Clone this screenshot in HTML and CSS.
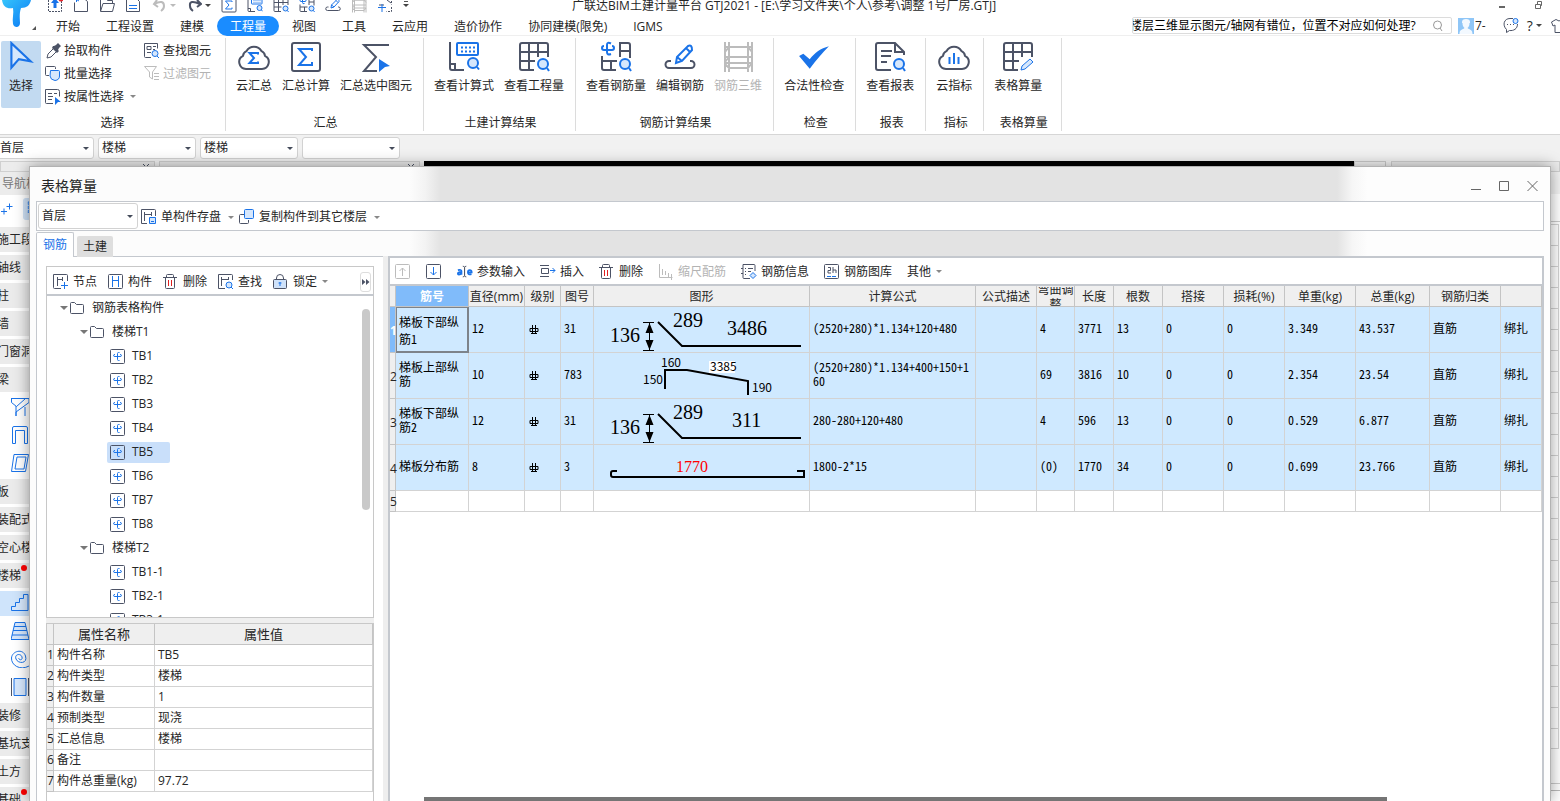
FILE: index.html
```html
<!DOCTYPE html>
<html lang="zh-CN">
<head>
<meta charset="utf-8">
<title>广联达BIM土建计量平台 GTJ2021</title>
<link rel="stylesheet" href="styles.css">
</head>
<body>
<svg class="defs" aria-hidden="true">
  <symbol id="sum-cloud" viewBox="0 0 32 30"><path class="d2" d="M8 27h16a7 7 0 0 0 3-13.2 6 6 0 0 0-3.400-4.600 8.800 8.800 0 0 0-15.200 0A6 6 0 0 0 5 13.800 7 7 0 0 0 8 27z"/><path class="b2" d="M20 12.500V11h-8.500l4.500 5-4.500 5H20v-1.500"/></symbol>
  <symbol id="sum-box" viewBox="0 0 32 32"><rect class="d2" x="2" y="2" width="28" height="28" rx="2"/><path class="b2" d="M22 10V8H9l7 8-7 8h13v-3"/></symbol>
  <symbol id="sum-pick" viewBox="0 0 32 32"><path class="d2" d="M29 4H4l12 12L4 30h13"/><path class="bf" d="M19 18l11 7-5 1-6 5z"/></symbol>
  <symbol id="calc-view" viewBox="0 0 32 32"><path class="d2" d="M2 1v26q0 2 2 2h12M2 23h5v6"/><rect class="b2" x="9" y="2" width="21" height="12" rx="1"/><path class="b2 dots" d="M13 6.500h14M13 10.500h14"/><circle class="bl2" cx="25" cy="22" r="5"/><path class="b2" d="M29 26l2 2.500"/></symbol>
  <symbol id="qty-view" viewBox="0 0 32 32"><path class="d2" d="M16 29H4q-2 0-2-2V4q0-2 2-2h24q2 0 2 2v12M2 11h28M2 20h15M11 2v27M20 2v14"/><circle class="bl2" cx="25" cy="23" r="5"/><path class="b2" d="M29 27l2 3"/></symbol>
  <symbol id="bar-view" viewBox="0 0 32 32"><path class="b2" d="M11 2.500q-4-2-4 1.500v7q0 3.500 4 2M4 5q-2 0-2 2t2 2h8q2 0 2-2t-2-2"/><path class="d2" d="M20 16V2h8q2 0 2 2v13M20 10h10M2 15v12q0 2 2 2h12M2 20h15M11 20v9"/><circle class="bl2" cx="25" cy="23" r="5"/><path class="b2" d="M29 27l2 3"/></symbol>
  <symbol id="bar-edit" viewBox="0 0 32 30"><path class="d2" d="M7 19H5a3.500 3.500 0 0 0 0 7h22a3.500 3.500 0 0 0 0-7h-1"/><path class="bl heavy" d="M12 21l1-6L24 4q2-1 3 0t1 4L18 19zM22 6l4 4M13 15l5 4"/></symbol>
  <symbol id="bar-3d" viewBox="0 0 32 30"><path class="g2" d="M3 0v30M7 0v30M26 0v30M30 0v30M3 5h27M3 10l4-5h19l4 5M3 15h27M3 21h27M3 20l4-5M26 26H7l-4-4M7 26h19l4-5"/></symbol>
  <symbol id="check" viewBox="0 0 30 30"><path class="bf" d="M1 14l4-2 6 5c5-6 10-10 18-12C23 11 17 18 11 26z"/></symbol>
  <symbol id="report" viewBox="0 0 32 32"><path class="d2" d="M17 29H4q-2 0-2-2V4q0-2 2-2h17l9 9v3M21 2v9h9M7 10h11M7 15h10M7 21h6"/><circle class="bl2" cx="25" cy="23" r="5"/><path class="b2" d="M29 27l2 3"/></symbol>
  <symbol id="index-cloud" viewBox="0 0 32 30"><path class="d2" d="M8 27h16a7 7 0 0 0 3-13.200 6 6 0 0 0-3.400-4.600 8.800 8.800 0 0 0-15.200 0A6 6 0 0 0 5 13.800 7 7 0 0 0 8 27z"/><path class="b2" d="M11.500 15v7M16 11v11M20.500 15v7"/></symbol>
  <symbol id="table-calc" viewBox="0 0 32 32"><path class="d2" d="M16 29H4q-2 0-2-2V4q0-2 2-2h24q2 0 2 2v12M2 11h28M2 20h15M11 2v27M20 2v14"/><path class="bl" d="M19 29l1-4 8-7 3 3-8 7z"/></symbol>
  <symbol id="pointer" viewBox="0 0 30 30"><path class="bl2" d="M6 2v23l7-8 11 2z"/></symbol>
  <symbol id="dropper" viewBox="0 0 16 16"><path class="df" d="M9 3l2-1 2-2 3 3-2 2-1 2 1 1-2 2-5-5 1-2z"/><path class="d" d="M8 6l-5 5-1 4 4-1 5-5"/></symbol>
  <symbol id="batch" viewBox="0 0 16 16"><path class="d" d="M4 9.500H1.500q-1 0-1-1v-7q0-1 1-1h8q1 0 1 1V3"/><path class="bl" d="M5.500 4.500h8q1 0 1 1V10q0 4-4.500 4.500-4.500-.5-5-4.500z"/></symbol>
  <symbol id="byprop" viewBox="0 0 16 16"><path class="d" d="M8 14.500H1.500q-1 0-1-1V.5h12q2 0 2 2v5M3 4.500h4M9 4.500h3M3 7.500h5M3 10.500h4"/><path class="bf" d="M10 8l6 5-3 0-3 3z"/></symbol>
  <symbol id="findel" viewBox="0 0 16 16"><path class="d" d="M7 14.500H1.500q-1 0-1-1V.5h13v5M3 3.500h4v3H3zM9 3.500h3M3 9.500h4M9 6.500h2"/><circle class="bl" cx="11" cy="10.500" r="3"/><path class="b" d="M13 13l2 2"/></symbol>
  <symbol id="filter" viewBox="0 0 16 16"><path class="g" d="M.5 .5h12L8.500 6v7l-3-2V6zM10 7.500h5M10 10.500h5M10 13.500h5"/></symbol>
  <symbol id="comp" viewBox="0 0 16 16"><rect class="d" x=".5" y=".5" width="14" height="14" rx="1"/><path class="b" d="M4.500 2v11M10.500 2v11M4.500 6.500h6"/></symbol>
  <symbol id="node" viewBox="0 0 16 16"><path class="d" d="M8 14.500H1.500q-1 0-1-1v-13h13q1 0 1 1V7M4.500 3v9M4.500 5.500h5M9.500 3v4"/><path class="b" d="M11.500 8v7M8 11.500h7"/></symbol>
  <symbol id="save" viewBox="0 0 16 16"><path class="d" d="M6 14.500H.5V.5h13q1 0 1 1V7M3.500 3v9M3.500 5.500h7M10.500 3v4"/><path class="bl" d="M8.500 8.500h6v6h-6zM10 12.500h3"/></symbol>
  <symbol id="find" viewBox="0 0 16 16"><path class="d" d="M7 14.500H.5V.5h13q1 0 1 1V6M3.500 3v9M3.500 5.500h7M10.500 3v3"/><circle class="bl" cx="11" cy="11" r="3"/><path class="b" d="M13 13l2 2"/></symbol>
  <symbol id="copy" viewBox="0 0 16 16"><path class="d" d="M9.500 11v2.500q0 1-1 1h-7q-1 0-1-1v-7q0-1 1-1H5"/><rect class="bl" x="5.500" y=".5" width="9" height="9" rx="1"/></symbol>
  <symbol id="trash" viewBox="0 0 16 16"><path class="d" d="M0 3.500h14M3.500 3.500v-2q0-1 1-1h5q1 0 1 1v2M2.500 3.500v10q0 1 1 1h7q1 0 1-1v-10"/><path class="r" d="M5.500 6v6M8.500 6v6"/></symbol>
  <symbol id="lock" viewBox="0 0 16 16"><path class="d" d="M3.500 6V4q0-3.500 3.500-3.500T10.500 4v2"/><rect class="lockbox" x=".5" y="5.500" width="13" height="9" rx="1"/><path class="b" d="M7 8v4M5.500 9h3"/></symbol>
  <symbol id="up" viewBox="0 0 16 16"><rect class="g" x=".5" y=".5" width="14" height="14" rx="1"/><path class="g" d="M7.500 12V4M4.500 7l3-3 3 3"/></symbol>
  <symbol id="down" viewBox="0 0 16 16"><rect class="d" x=".5" y=".5" width="14" height="14" rx="1"/><path class="b" d="M7.500 3v8M4.500 8l3 3 3-3"/></symbol>
  <symbol id="param" viewBox="0 0 18 16"><path class="b2" d="M1 6q4-1 4 1v4M5 8q-4 0-4 2t4 0M12 8.500h4.500q0-2.500-2.200-2.500-2 0-2 2.500 0 3 4 2"/><path class="d" d="M6.500 1.500q2 0 2 1.500v9q0 1.500-2 1.500M10.500 1.500q-2 0-2 1.500v9q0 1.500 2 1.500"/></symbol>
  <symbol id="insert" viewBox="0 0 16 16"><path class="d" d="M0 1.500h9M0 12.500h9M1.500 4.500h7v5h-7z"/><path class="b" d="M10 6.500h5M12.500 4l2.500 2.500L12.500 9"/></symbol>
  <symbol id="scale" viewBox="0 0 16 16"><path class="g" d="M1.500 0v13.500h13M4.500 5v6M7.500 7v4M10.500 9v4M13.500 10v6"/></symbol>
  <symbol id="info" viewBox="0 0 16 16"><path class="d" d="M9 14.500H3q-1 0-1-1V.5h11q1 0 1 1V7M0 4.500h2M0 9.500h2M4 4.500h1M7 4.500h5M4 7.500h1M7 7.500h3M4 10.500h1"/><path class="bl" d="M12 8.500l3 3-3 3-3-3z"/></symbol>
  <symbol id="library" viewBox="0 0 16 16"><rect class="d" x=".5" y=".5" width="14" height="14" rx="1"/><path class="d" d="M4 3.500h2.500v3H4v2.500h3M9 3v6M9 6h3v3"/><path class="b" d="M3 12.500h4M8 12.500h4"/></symbol>
  <symbol id="folder" viewBox="0 0 15 13"><path class="d" d="M.5 10.500v-9q0-1 1-1h3l2 2h6q1 0 1 1v7q0 1-1 1h-11q-1 0-1-1z"/></symbol>
  <symbol id="rebar" viewBox="0 0 15 15"><rect class="d" x=".5" y=".5" width="14" height="14" rx="1"/><path class="b" d="M9.500 3.500h-1q-1 0-1 1v6q0 1 1 1h1M5 5.500q-1.500 0-1.500 1t1.500 1h5q1.500 0 1.500-1t-1.500-1"/></symbol>
  <symbol id="grade" viewBox="0 0 10 10"><path class="k" d="M1 3.500h8v3H1zM3.500 0v9M6.500 0v9M2 8.500h6"/></symbol>
  <symbol id="export" viewBox="0 0 16 16"><path class="d dash" d="M4 2.500H1.500v12h13v-12H12"/><path class="bf" d="M8 1l4 5H9.500v5h-3V6H4z"/><circle class="rf" cx="14" cy="2" r="2.500"/></symbol>
  <symbol id="new" viewBox="0 0 16 16"><path class="d" d="M7 1.500h4l3.500 3v10h-13v-9"/><path class="b" d="M1 1l5 3M3.500 0v5"/></symbol>
  <symbol id="open" viewBox="0 0 16 16"><path class="d" d="M1.500 14V1.500h5l2 2h5V6M1.500 14.500L4 6.500h11.500l-2 8z"/></symbol>
  <symbol id="disk" viewBox="0 0 16 16"><path class="d" d="M1.500 14V1.500h10l3 3v10h-13z"/><path class="b" d="M4 8.500h8M4 11.500h8"/></symbol>
  <symbol id="undo" viewBox="0 0 16 16"><path class="g2" d="M6 3L3 7l4 3M3 7q10-5 10 2 0 3-3 5"/></symbol>
  <symbol id="redo" viewBox="0 0 16 16"><path class="d2" d="M11 3l4 4-4 3M14 7Q3 2 4 9q0 3 3 5"/></symbol>
  <symbol id="recover" viewBox="0 0 16 16"><path class="d dash" d="M2 2.500h5M10 2.500h4.500v5M14.500 10v4.500h-5"/><path class="d" d="M7 8l-5 0M10 3l4 3"/><path class="b" d="M1 10.500h8M5 7v8"/></symbol>
  <symbol id="n-beam" viewBox="0 0 18 18"><path class="b" d="M0 .5h18v4L5 14v4M.5 .5v4l5 4L14 1M14 18V9M5 8v10"/></symbol>
  <symbol id="n-link" viewBox="0 0 18 18"><path class="b" d="M1.500 17.500V2q0-1.500 1.500-1.500h12q1.500 0 1.500 1.500v15.500h-3v-13h-9v13z"/></symbol>
  <symbol id="n-ring" viewBox="0 0 18 18"><path class="b" d="M3 .5h14.500l-3 17H.5zM6 3h9l-2 12H4z"/></symbol>
  <symbol id="n-stair" viewBox="0 0 18 18"><path class="bl" d="M.5 16.500v-4h4v-4h4v-4h4v-4H17v16z"/></symbol>
  <symbol id="n-flight" viewBox="0 0 18 18"><path class="bl" d="M4 .5h10l4 17H0zM3 4.500h12M2 8.500h14M1 13h16"/></symbol>
  <symbol id="n-spiral" viewBox="0 0 18 18"><path class="b" d="M18 16C9 21 0 15 .5 8S12-2 14.500 6 7 14 5 9s5-6 6-2-4 3-3 1"/></symbol>
  <symbol id="n-well" viewBox="0 0 18 18"><path class="d" d="M.5 0v18M17.500 0v18"/><path class="bl" d="M3 .5h12v17H3z"/></symbol>
</svg>

<header class="top">
  <div class="brand">
    <svg class="logo" viewBox="0 0 32 28"><defs><linearGradient id="lg" x1="0" y1="0" x2="1" y2="1"><stop offset="0" stop-color="#35c4fb"/><stop offset="1" stop-color="#0a78f5"/></linearGradient></defs><path fill="url(#lg)" d="M2 0h29c-1 5-4 8-10 8-2 6-1 11-1 15 0 5-6 5-7 1-1-5 1-11 0-16C7 9 3 7 2 0z"/></svg>
    <i class="corner"></i>
  </div>
  <div class="quick">
    <svg><use href="#export"/></svg><svg><use href="#new"/></svg><svg><use href="#open"/></svg><svg><use href="#disk"/></svg>
    <span class="pair"><svg><use href="#undo"/></svg><i class="caret light"></i></span>
    <span class="pair"><svg><use href="#redo"/></svg><i class="caret"></i></span>
    <svg><use href="#sum-box"/></svg><svg><use href="#calc-view"/></svg><svg><use href="#qty-view"/></svg><svg><use href="#bar-view"/></svg><svg><use href="#bar-edit"/></svg><svg><use href="#bar-3d"/></svg><svg><use href="#recover"/></svg><i class="caret barred"></i>
  </div>
  <h1 class="title">广联达BIM土建计量平台 GTJ2021 - [E:\学习文件夹\个人\参考\调整 1号厂房.GTJ]</h1>
  <div class="winctl">
    <svg viewBox="0 0 60 16"><path class="w2" d="M10 7h6"/><path class="w" d="M46.500 4.500h5v4h-5zM48.500 4V1.500h4v4H52"/></svg>
  </div>
  <nav class="tabs">
    <a href="#">开始</a><a href="#">工程设置</a><a href="#">建模</a><a href="#" class="on">工程量</a><a href="#">视图</a><a href="#">工具</a><a href="#">云应用</a><a href="#">造价协作</a><a href="#">协同建模(限免)</a><a href="#">IGMS</a>
  </nav>
  <div class="account">
    <div class="search"><input type="text" aria-label="搜索" value="楼层三维显示图元/轴网有错位，位置不对应如何处理?"><svg viewBox="0 0 12 12"><circle class="g2" cx="5.500" cy="5" r="4"/><path class="g2" d="M8 8l2 3"/></svg></div>
    <svg class="avatar" viewBox="0 0 16 16"><path fill="#8fc6f7" d="M0 0h16v16H0z"/><path fill="#f3f9ff" d="M4 4q0-3 4-3t4 3v1h-.500c0 3-1 4-2 5 2 2 5 1 5 6h-13c0-5 3-4 5-6-1-1-2-2-2-5H4z"/></svg>
    <span class="user">7-</span>
    <svg class="chat" viewBox="0 0 16 16"><path class="d" d="M14.500 6c0 5-4 7-8 6.500l-3 2v-3C-1 7 1 .5 7 .5h3"/><path class="d" d="M4 6.500h1M7 6.500h1M10 6.500h1"/><circle class="bl" cx="12.500" cy="3" r="2.500"/></svg>
    <span class="help">?</span><i class="caret"></i>
    <svg class="shirt" viewBox="0 0 16 16"><path class="d" d="M5 1.500L.5 4 2 8l2-1v7.500h9V7l2 1"/><path class="d" d="M5 1.500q3 3 6 0"/></svg>
  </div>
</header>

<section class="ribbon">
  <div class="group g-select">
    <div class="tools">
      <button class="big on"><svg><use href="#pointer"/></svg>选择</button>
      <div class="stack">
        <button><svg><use href="#dropper"/></svg>拾取构件</button>
        <button><svg><use href="#batch"/></svg>批量选择</button>
        <button><svg><use href="#byprop"/></svg>按属性选择<i class="caret mid"></i></button>
      </div>
      <div class="stack">
        <button><svg><use href="#findel"/></svg>查找图元</button>
        <button disabled><svg><use href="#filter"/></svg>过滤图元</button>
      </div>
    </div>
    <h2>选择</h2>
  </div>
  <div class="group"><div class="tools">
    <button class="big"><svg><use href="#sum-cloud"/></svg>云汇总</button>
    <button class="big"><svg><use href="#sum-box"/></svg>汇总计算</button>
    <button class="big"><svg><use href="#sum-pick"/></svg>汇总选中图元</button>
  </div><h2>汇总</h2></div>
  <div class="group"><div class="tools">
    <button class="big"><svg><use href="#calc-view"/></svg>查看计算式</button>
    <button class="big"><svg><use href="#qty-view"/></svg>查看工程量</button>
  </div><h2>土建计算结果</h2></div>
  <div class="group"><div class="tools">
    <button class="big"><svg><use href="#bar-view"/></svg>查看钢筋量</button>
    <button class="big"><svg><use href="#bar-edit"/></svg>编辑钢筋</button>
    <button class="big" disabled><svg><use href="#bar-3d"/></svg>钢筋三维</button>
  </div><h2>钢筋计算结果</h2></div>
  <div class="group"><div class="tools"><button class="big"><svg><use href="#check"/></svg>合法性检查</button></div><h2>检查</h2></div>
  <div class="group"><div class="tools"><button class="big"><svg><use href="#report"/></svg>查看报表</button></div><h2>报表</h2></div>
  <div class="group"><div class="tools"><button class="big"><svg><use href="#index-cloud"/></svg>云指标</button></div><h2>指标</h2></div>
  <div class="group g-table"><div class="tools"><button class="big"><svg><use href="#table-calc"/></svg>表格算量</button></div><h2>表格算量</h2></div>
</section>

<div class="pickers">
  <span class="drop"><select aria-label="楼层"><option>首层</option></select></span>
  <span class="drop"><select aria-label="构件大类"><option>楼梯</option></select></span>
  <span class="drop"><select aria-label="构件类型"><option>楼梯</option></select></span>
  <span class="drop"><select aria-label="构件"><option></option></select></span>
</div>

<main class="work">
  <aside class="nav">
    <div class="dock"><svg viewBox="0 0 8 6"><path class="d" d="M1 2l6 6M7 2L1 8"/></svg></div>
    <h3>导航栏</h3>
    <div class="navtools"><svg viewBox="0 0 12 12"><path class="b" d="M0 8.500h6M3 5.500v6M5.500 3.500h6M8.500 .5v6"/></svg><span class="listbtn"><svg viewBox="0 0 12 14"><path class="b" d="M.5 1h3v3h-3zM.5 6h3v3h-3zM.5 11h3v3h-3z"/></svg></span></div>
    <ul>
      <li>施工段</li><li>轴线</li><li>柱</li><li>墙</li><li>门窗洞</li><li>梁</li>
      <li class="tool"><svg><use href="#n-beam"/></svg></li><li class="tool"><svg><use href="#n-link"/></svg></li><li class="tool"><svg><use href="#n-ring"/></svg></li>
      <li>板</li><li>装配式</li><li>空心楼盖</li><li class="new">楼梯</li>
      <li class="tool on"><svg><use href="#n-stair"/></svg></li><li class="tool"><svg><use href="#n-flight"/></svg></li><li class="tool"><svg><use href="#n-spiral"/></svg></li><li class="tool"><svg><use href="#n-well"/></svg></li>
      <li>装修</li><li>基坑支护</li><li>土方</li><li class="new">基础</li>
    </ul>
  </aside>
  <div class="listdock"><div class="dock"><svg viewBox="0 0 8 6"><path class="d" d="M1 2l6 6M7 2L1 8"/></svg></div></div>
  <div class="canvas"></div>
  <div class="canvasend"></div>
  <aside class="props"><div class="dock"></div><div class="propbar"></div><div class="propgrid"></div><div class="propfoot"></div></aside>

  <section class="dialog" role="dialog" aria-label="表格算量">
    <div class="dhead"><h2>表格算量</h2>
      <svg viewBox="0 0 70 14"><path class="w" d="M0 10.500h10M28.500 2.500h9v9h-9zM56.500 2l10 10M66.500 2l-10 10"/></svg>
    </div>
    <div class="dtools">
      <span class="drop"><select aria-label="楼层选择"><option>首层</option></select></span>
      <button><svg><use href="#save"/></svg>单构件存盘<i class="caret mid"></i></button>
      <button><svg><use href="#copy"/></svg>复制构件到其它楼层<i class="caret mid"></i></button>
    </div>
    <div class="dtabs"><button class="on">钢筋</button><button>土建</button></div>
    <div class="dbody">
      <div class="left">
        <div class="ltools">
          <button><svg><use href="#node"/></svg>节点</button><button><svg><use href="#comp"/></svg>构件</button><button><svg><use href="#trash"/></svg>删除</button><button><svg><use href="#find"/></svg>查找</button><button><svg><use href="#lock"/></svg>锁定<i class="caret mid"></i></button>
          <button class="more" aria-label="更多"><svg viewBox="0 0 8 6"><path class="df" d="M0 0l3.500 3L0 6zM4 0l3.500 3L4 6z"/></svg></button>
        </div>
        <div class="tree">
          <ul>
            <li class="l0"><i class="caret tri"></i><svg class="fold"><use href="#folder"/></svg>钢筋表格构件</li>
            <li class="l1"><i class="caret tri"></i><svg class="fold"><use href="#folder"/></svg>楼梯T1</li>
            <li class="l2"><span><svg><use href="#rebar"/></svg>TB1</span></li>
            <li class="l2"><span><svg><use href="#rebar"/></svg>TB2</span></li>
            <li class="l2"><span><svg><use href="#rebar"/></svg>TB3</span></li>
            <li class="l2"><span><svg><use href="#rebar"/></svg>TB4</span></li>
            <li class="l2 on"><span><svg><use href="#rebar"/></svg>TB5</span></li>
            <li class="l2"><span><svg><use href="#rebar"/></svg>TB6</span></li>
            <li class="l2"><span><svg><use href="#rebar"/></svg>TB7</span></li>
            <li class="l2"><span><svg><use href="#rebar"/></svg>TB8</span></li>
            <li class="l1"><i class="caret tri"></i><svg class="fold"><use href="#folder"/></svg>楼梯T2</li>
            <li class="l2"><span><svg><use href="#rebar"/></svg>TB1-1</span></li>
            <li class="l2"><span><svg><use href="#rebar"/></svg>TB2-1</span></li>
            <li class="l2"><span><svg><use href="#rebar"/></svg>TB3-1</span></li>
          </ul>
          <i class="thumb"></i>
        </div>
        <div class="attrs">
          <table>
            <colgroup><col class="a0"><col class="a1"><col></colgroup>
            <thead><tr><th></th><th>属性名称</th><th>属性值</th></tr></thead>
            <tbody>
              <tr><th>1</th><td>构件名称</td><td>TB5</td></tr>
              <tr><th>2</th><td>构件类型</td><td>楼梯</td></tr>
              <tr><th>3</th><td>构件数量</td><td>1</td></tr>
              <tr><th>4</th><td>预制类型</td><td>现浇</td></tr>
              <tr><th>5</th><td>汇总信息</td><td>楼梯</td></tr>
              <tr><th>6</th><td>备注</td><td></td></tr>
              <tr><th>7</th><td>构件总重量(kg)</td><td>97.72</td></tr>
            </tbody>
          </table>
        </div>
      </div>
      <div class="right">
        <div class="rtools">
          <button disabled aria-label="上移"><svg><use href="#up"/></svg></button><button aria-label="下移"><svg><use href="#down"/></svg></button><button><svg><use href="#param"/></svg>参数输入</button><button><svg><use href="#insert"/></svg>插入</button><button><svg><use href="#trash"/></svg>删除</button><button disabled><svg><use href="#scale"/></svg>缩尺配筋</button><button><svg><use href="#info"/></svg>钢筋信息</button><button><svg><use href="#library"/></svg>钢筋图库</button><button>其他<i class="caret mid"></i></button>
        </div>
        <table class="bars">
          <colgroup><col class="c0"><col class="c1"><col class="c2"><col class="c3"><col class="c4"><col class="c5"><col class="c6"><col class="c7"><col class="c8"><col class="c9"><col class="c10"><col class="c7"><col class="c7"><col class="c13"><col class="c14"><col class="c13"><col></colgroup>
          <thead><tr><th></th><th class="cur">筋号</th><th>直径(mm)</th><th>级别</th><th>图号</th><th>图形</th><th>计算公式</th><th>公式描述</th><th><div class="wrap">弯曲调整</div></th><th>长度</th><th>根数</th><th>搭接</th><th>损耗(%)</th><th>单重(kg)</th><th>总重(kg)</th><th>钢筋归类</th><th></th></tr></thead>
          <tbody>
            <tr><th class="cur">1</th><td class="focus">梯板下部纵筋1</td><td>12</td><td class="gr"><svg><use href="#grade"/></svg></td><td>31</td>
              <td class="shape"><svg viewBox="0 0 215 45"><text x="16" y="35">136</text><text x="79" y="20">289</text><text x="133" y="28">3486</text><path class="k" d="M49 15.500h11M49 43.500h11M55.500 16v27"/><path class="kf" d="M55.500 16l4 10h-8zM55.500 43l4-10h-8z"/><path class="k2" d="M64 15l24 24h119"/></svg></td>
              <td>(2520+280)*1.134+120+480</td><td></td><td>4</td><td>3771</td><td>13</td><td>0</td><td>0</td><td>3.349</td><td>43.537</td><td>直筋</td><td>绑扎</td></tr>
            <tr><th>2</th><td>梯板上部纵筋</td><td>10</td><td class="gr"><svg><use href="#grade"/></svg></td><td>783</td>
              <td class="shape"><svg viewBox="0 0 215 45"><path class="k2" d="M71 36V17h22l61 11v14"/><rect class="tag" x="115" y="8" width="26" height="12"/><g class="small"><text x="67" y="14">160</text><text x="49" y="31">150</text><text x="116" y="18">3385</text><text x="158" y="39">190</text></g></svg></td>
              <td>(2520+280)*1.134+400+150+160</td><td></td><td>69</td><td>3816</td><td>10</td><td>0</td><td>0</td><td>2.354</td><td>23.54</td><td>直筋</td><td>绑扎</td></tr>
            <tr><th>3</th><td>梯板下部纵筋2</td><td>12</td><td class="gr"><svg><use href="#grade"/></svg></td><td>31</td>
              <td class="shape"><svg viewBox="0 0 215 45"><text x="16" y="35">136</text><text x="79" y="20">289</text><text x="138" y="28">311</text><path class="k" d="M49 15.500h11M49 43.500h11M55.500 16v27"/><path class="kf" d="M55.500 16l4 10h-8zM55.500 43l4-10h-8z"/><path class="k2" d="M64 15l24 24h119"/></svg></td>
              <td>280-280+120+480</td><td></td><td>4</td><td>596</td><td>13</td><td>0</td><td>0</td><td>0.529</td><td>6.877</td><td>直筋</td><td>绑扎</td></tr>
            <tr><th>4</th><td>梯板分布筋</td><td>8</td><td class="gr"><svg><use href="#grade"/></svg></td><td>3</td>
              <td class="shape"><svg viewBox="0 0 215 45"><text class="red" x="82" y="27">1770</text><path class="k2" d="M23 26h-4q-2 0-2 2v2q0 2 2 2h186M203 26h7v6h-5"/></svg></td>
              <td>1800-2*15</td><td></td><td>(0)</td><td>1770</td><td>34</td><td>0</td><td>0</td><td>0.699</td><td>23.766</td><td>直筋</td><td>绑扎</td></tr>
            <tr class="blank"><th>5</th><td></td><td></td><td></td><td></td><td></td><td></td><td></td><td></td><td></td><td></td><td></td><td></td><td></td><td></td><td></td><td></td></tr>
          </tbody>
        </table>
      </div>
    </div>
  </section>
  <div class="hscroll"></div>
</main>
</body>
</html>
```
FILE: styles.css
```css
* { box-sizing: border-box; }
body {
  margin: 0;
  height: 100vh;
  overflow: hidden;
  display: flex;
  flex-direction: column;
  background: #fff;
  color: #262626;
  font: 12px/16px "Open Sans", "Noto Sans CJK SC", sans-serif;
}
h1, h2, h3, ul { margin: 0; padding: 0; font-weight: 400; list-style: none; }
button {
  border: 0;
  padding: 0;
  background: none;
  color: inherit;
  font: inherit;
  white-space: nowrap;
  display: flex;
  align-items: center;
  gap: 4px;
}
button:disabled { color: #b3b3b3; }
button > svg { width: 16px; height: 16px; flex: none; }
.defs { position: absolute; width: 0; height: 0; }

/* icon strokes */
.d, .d2, .b, .b2, .bl, .bl2, .g, .g2, .r, .k, .k2, .w, .w2 { fill: none; stroke-width: 1; }
.d, .d2 { stroke: #4c5366; }
.b, .b2, .bl, .bl2 { stroke: #1a73e8; }
.g, .g2 { stroke: #bcbcbc; }
.r { stroke: #e02020; }
.k, .k2 { stroke: #000; }
.w, .w2 { stroke: #666; }
.d2, .b2, .bl2, .g2, .k2, .w2 { stroke-width: 2; }
.search .g2 { stroke-width: 1; stroke: #999; }
.bl, .bl2 { fill: #d6e7fc; }
.heavy { stroke-width: 2; fill: none; }
.bf { fill: #1a73e8; }
.df { fill: #4c5366; }
.kf { fill: #000; }
.rf { fill: #e8252a; }
.lockbox { fill: #cfe2fa; stroke: #4c5366; }
.dots { stroke-dasharray: 2 2; }
.dash { stroke-dasharray: 2 1; }

.caret {
  border: 3px solid transparent;
  border-top-color: #444;
  border-bottom: 0;
  width: 0;
  flex: none;
}
.caret.light { border-top-color: #bbb; }
.caret.mid { border-top-color: #888; margin-left: 1px; }
.caret.tri { border-width: 4px 4px 0; border-top-color: #777; }
.caret.barred { box-shadow: 0 -4px 0 -1px #555; }

/* header */
.top {
  display: grid;
  grid-template: 16px 19px / 43px auto 1fr auto;
  border-bottom: 1px solid #efefef;
  flex: none;
}
.brand { grid-row: 1 / 3; display: flex; align-items: flex-end; }
.logo { width: 32px; height: 28px; align-self: flex-start; }
.corner { border: solid transparent; border-width: 0 0 4px 4px; border-bottom-color: #555; margin-bottom: 5px; }
.quick { display: flex; align-items: center; gap: 10px; padding-left: 4px; height: 10px; }
.quick svg { width: 16px; height: 16px; }
.pair { display: flex; align-items: center; gap: 3px; }
.quick .d2, .quick .b2, .quick .g2, .quick .bl2 { stroke-width: 1; }
.title { font-size: 12px; line-height: 12px; padding-left: 163px; white-space: nowrap; }
.winctl svg { width: 60px; height: 16px; margin-right: 11px; display: block; }
.tabs { grid-column: 2 / 4; display: flex; align-items: center; z-index: 1; }
.tabs a { padding: 1px 13px 0; line-height: 19px; color: inherit; text-decoration: none; }
.tabs a.on { background: #1a8cff; color: #fff; border-radius: 10px; }
.account { display: flex; align-items: center; grid-column: 4; justify-self: end; width: 428px; overflow: hidden; }
.top > .winctl { grid-column: 4; grid-row: 1; justify-self: end; }
.search { width: 320px; height: 17px; border: 1px solid #dcdcdc; border-radius: 2px; display: flex; align-items: center; flex: none; }
.search input { flex: 1; min-width: 0; border: 0; padding: 0; height: 15px; font: inherit; color: #000; text-indent: -3px; background: none; }
.search svg { width: 12px; height: 12px; margin: 0 7px; }
.avatar { width: 16px; height: 16px; margin-left: 6px; flex: none; }
.user { margin: 0 17px 0 1px; }
.chat, .shirt { width: 16px; height: 16px; flex: none; }
.help { margin: 0 3px 0 8px; font-size: 14px; }
.shirt { margin-left: 9px; }

/* ribbon */
.ribbon { display: flex; height: 99px; padding-top: 2px; border-bottom: 1px solid #d6d6d6; flex: none; }
.group { border-right: 1px solid #dcdcdc; height: 93px; padding: 0 11px 0 10px; display: flex; flex-direction: column; justify-content: space-between; }
.group h2 { font-size: 12px; text-align: center; line-height: 16px; padding-left: 3px; }
.tools { display: flex; gap: 10px; }
.big { flex-direction: column; gap: 5px; padding-top: 3px; }
.big > svg { width: 32px; height: 32px; }
.big.on { background: #c2daf1; width: 40px; height: 67px; border-radius: 2px; margin-top: 3px; padding-top: 0; }
.g-select { width: 226px; padding: 0 1px; }
.g-select h2 { padding: 0; }
.g-select .tools { gap: 0; }
.g-select .stack + .stack { margin-left: 4px; }
.stack { display: flex; flex-direction: column; padding: 4px 0 0 4px; }
.stack button { height: 23px; gap: 3px; padding-bottom: 6px; }
.stack .mid { margin-left: 3px; }
.g-table { width: 78px; }

/* pickers */
.pickers { display: flex; gap: 4px; height: 26px; padding: 2px 0; margin-left: -4px; background: #f1f1f1; flex: none; }
.drop { position: relative; display: flex; width: 98px; height: 22px; }
.drop select { appearance: none; width: 100%; border: 1px solid #d2d2d2; border-radius: 3px; background: #fff; font: inherit; color: inherit; padding: 0 3px; }
.drop::after { content: ""; position: absolute; right: 5px; top: 10px; border: 3px solid transparent; border-top-color: #444b5a; border-bottom: 0; }

/* workspace */
.work { flex: 1; min-height: 0; position: relative; display: flex; background: #f4f4f4; }
.dock { height: 11px; background: #ececec; border: 1px solid #d0d0d0; display: flex; justify-content: flex-end; padding-right: 4px; }
.dock svg { width: 8px; height: 6px; }
.nav { width: 155px; background: #fff; overflow: hidden; }
.nav h3 { background: #ececec; color: #777; font-size: 12px; line-height: 23px; padding-left: 2px; }
.navtools { display: flex; gap: 10px; align-items: center; height: 32px; padding: 0 0 4px 1px; }
.navtools svg { width: 12px; height: 12px; flex: none; }
.listbtn { background: #cfe2f7; padding: 3px 4px; border-radius: 3px; width: 24px; height: 22px; }
.nav li { height: 25px; line-height: 25px; margin: 0 0 3px -3px; background: #ebebeb; position: relative; }
.nav .tool { background: #fff; padding: 3px 0 0 14px; }
.nav .tool.on { background: #cfe4fb; }
.nav .tool svg { width: 18px; height: 18px; display: block; }
.nav .new::after { content: ""; position: absolute; left: 24px; top: 2px; width: 6px; height: 6px; border-radius: 50%; background: #f00; }
.listdock { width: 261px; margin-left: 4px; background: #fff; }
.canvas { flex: 1; margin-left: 4px; background: #000; }
.canvasend { width: 32px; border: 1px solid #ccc; background: #f5f5f5; }
.props { width: 169px; margin-left: 5px; display: flex; flex-direction: column; background: #fff; }
.propbar { height: 50px; border-bottom: 1px solid #ccc; background: linear-gradient(#f3f3f3 22px, #fff 22px); }
.propgrid { flex: 1; margin: 2px 1px 0 0; border: 1px solid #d3d3d3; background: repeating-linear-gradient(#fff 0 20px, #d3d3d3 20px 21px); }
.propfoot { height: 52px; background: linear-gradient(#fff 34px, #ccc 34px 35px, #fff 35px 41px, #bbb 41px 42px, #fff 42px); }
.hscroll { position: absolute; left: 424px; right: 173px; bottom: 0; height: 4px; background: #757575; }

/* dialog */
.dialog {
  position: absolute;
  left: 29px;
  right: 9px;
  top: 5px;
  bottom: 0;
  border: 1px solid #b2b2b2;
  border-bottom: 0;
  background: linear-gradient(90deg, #fcfcfc 25%, #f3f3f3 26%, #e3e3e3 27%, #e3e3e3 86%, #f6f6f6 87%, #fdfdfd 88%);
  box-shadow: 0 0 14px rgba(0, 0, 0, .4);
  display: flex;
  flex-direction: column;
}
.dhead { display: flex; justify-content: space-between; align-items: center; height: 34px; padding: 3px 9px 0 11px; }
.dhead h2 { font-size: 14px; line-height: 20px; }
.dhead svg { width: 70px; height: 14px; }
.dtools { display: flex; align-items: center; height: 30px; margin: 0 6px; padding-left: 1px; background: #fff; border: 1px solid #c4c8ce; }
.dtools .drop { width: 100px; height: 26px; }
.dtools .drop::after { top: 12px; }
.dtools button { margin-left: 3px; padding-top: 2px; }
.dtools button + button { margin-left: 5px; }
.dtools .mid { margin-left: 3px; }
.dtabs { display: flex; align-items: flex-end; gap: 3px; height: 26px; margin: 0 6px; z-index: 1; }
.dtabs button { height: 21px; padding: 0 6px; background: #dedede; border-radius: 2px 2px 0 0; }
.dtabs .on { height: 25px; background: #fff; color: #1a73e8; border: solid #c4c8ce; border-width: 1px 1px 0; }
.dbody { flex: 1; min-height: 0; display: flex; gap: 5px; margin: -1px 6px 0; background: #eee; }
.left { width: 347px; display: flex; flex-direction: column; padding: 9px 9px 0; background: #fff; border: solid #c4c8ce; border-width: 1px 0 0 1px; }
.ltools { display: flex; align-items: center; gap: 11px; height: 28px; padding: 2px 2px 0 6px; border: solid #c8c8c8; border-width: 1px 1px 0; }
.more { margin-left: auto; width: 11px; height: 20px; border: 1px solid #ddd; border-radius: 3px; justify-content: center; }
.more > svg { width: 8px; height: 6px; }
.tree { height: 324px; border: 1px solid #c8c8c8; overflow: hidden; position: relative; flex: none; border-top-width: 2px; border-top-color: #c4c8ce; }
.tree li { height: 24px; display: flex; align-items: center; }
.tree .l0 { padding-left: 13px; }
.tree .l1 { padding-left: 33px; }
.tree .l2 { padding-left: 60px; }
.fold { width: 15px; height: 13px; margin: 0 7px 0 2px; }
.tree .l2 span { display: flex; align-items: center; gap: 7px; height: 21px; padding: 0 4px 0 3px; }
.tree .l2 svg { width: 15px; height: 15px; }
.tree .l2.on span { width: 63px; background: #c9dffa; border-radius: 2px; }
.thumb { position: absolute; right: 3px; top: 13px; width: 8px; height: 201px; border-radius: 4px; background: #c9c9c9; }
.attrs { flex: 1; margin-top: 5px; border: 1px solid #c8c8c8; border-bottom: 0; min-height: 0; box-shadow: 0 -5px 0 #efefef; }
table { table-layout: fixed; width: 100%; border-collapse: separate; border-spacing: 0; }
th, td { padding: 0; border: solid #d3d3d3; border-width: 0 1px 1px 0; font-weight: 400; }
th { background: #efefef; border-color: #c4c4c4; white-space: nowrap; }
.attrs tr { height: 21px; }
.attrs thead th { font-size: 13px; }
.attrs td { padding-left: 3px; line-height: 16px; }
.a0 { width: 7px; }
.a1 { width: 101px; }
.right { flex: 1; min-width: 0; background: #fff; border: 2px solid #c4c8ce; border-bottom: 0; }
.rtools { display: flex; align-items: center; gap: 15px; height: 28px; padding: 1px 0 0 5px; border-bottom: 2px solid #c4c8ce; }

/* bar table */
.bars td { height: 46px; background: #cfe9ff; color: #000; padding: 0 3px 3px; line-height: 14px; font-family: "Noto Sans CJK SC", sans-serif; font-feature-settings: "hwid"; word-break: break-all; }
.bars thead th { height: 21px; padding-top: 1px; }
.bars .blank td { height: 21px; background: #fff; }
.bars tbody th { padding-top: 2px; }
.bars .cur { background: #80bbfa; color: #fff; font-weight: 700; }
.bars .focus { line-height: 17px; border: 2px solid #7d838a; border-width: 1px 2px 2px 1px; padding: 0 2px; }
.bars .wrap { height: 19px; line-height: 15px; display: flex; align-items: center; text-align: center; white-space: normal; overflow: hidden; }
.bars .gr { padding: 0 0 0 4px; }
.gr svg { width: 10px; height: 10px; display: block; }
.bars .shape { padding: 0; }
.shape svg { display: block; width: 215px; height: 45px; }
.shape text { font: 20px "Liberation Serif", serif; }
.shape .small text { font: 12px "Noto Sans CJK SC", sans-serif; }
.shape .red { fill: #f00; font-size: 16px; }
.tag { fill: #fff; }
.c0 { width: 6px; } .c1 { width: 73px; } .c2 { width: 56px; } .c3 { width: 36px; }
.c4 { width: 33px; } .c5 { width: 216px; } .c6 { width: 166px; } .c7 { width: 61px; }
.c8 { width: 38px; } .c9 { width: 39px; } .c10 { width: 49px; } .c13 { width: 71px; } .c14 { width: 74px; }
```
